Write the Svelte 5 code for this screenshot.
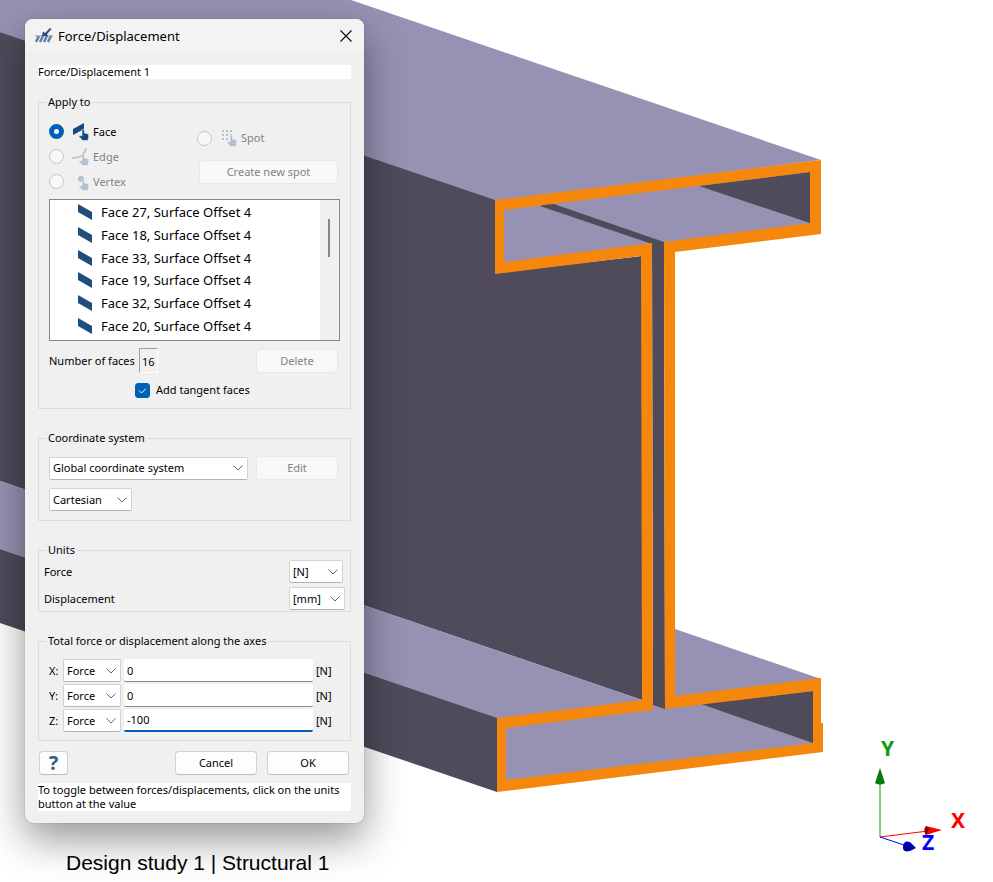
<script>
	const targets = [
		{ id: 'face', label: 'Face' },
		{ id: 'edge', label: 'Edge' },
		{ id: 'vertex', label: 'Vertex' }
	];
	const faces = [27, 18, 33, 19, 32, 20];

	let name = $state('Force/Displacement 1');
	let target = $state('face');
	let tangent = $state(true);
	let axes = $state([
		{ axis: 'X', value: '0' },
		{ axis: 'Y', value: '0' },
		{ axis: 'Z', value: '-100' }
	]);
</script>

{#snippet dropdown(label, options, size)}
	<span class="dropdown dropdown--{size}">
		<select aria-label={label}>
			{#each options as option}
				<option>{option}</option>
			{/each}
		</select>
		<svg class="dropdown__arrow" viewBox="0 0 10 6" aria-hidden="true">
			<path d="M0.5 0.5 L5 5 L9.5 0.5" />
		</svg>
	</span>
{/snippet}

{#snippet targetIcon(id)}
	<svg class="target-icon" viewBox="0 0 18 18" aria-hidden="true">
		{#if id === 'face'}
			<path d="M1 6 L12 0 V6 L1 12 Z" />
		{:else if id === 'edge'}
			<path class="target-icon__line" d="M0 10 C7 10 13 7 14 0" />
		{:else if id === 'vertex'}
			<circle cx="9" cy="6" r="3" />
		{:else}
			{#each [1, 5, 9] as y}
				{#each [2, 6, 10] as x}
					<rect {x} {y} width="2" height="2" />
				{/each}
			{/each}
		{/if}
		<path
			class="target-icon__hand"
			d="M10 7 C10 6 12.4 6 12.4 7 V10 L16.6 11 V15 L15.6 17.5 H10.6 L7 13.4 L8 12.2 L10 13 Z"
		/>
	</svg>
{/snippet}

<main class="viewport">
	<svg class="scene" viewBox="0 0 993 882" preserveAspectRatio="xMinYMin slice" aria-hidden="true">
		<path class="light" d="M0 0 H351 L821 160 L495 201 L0 32 Z" />
		<path class="dark" d="M0 32 L495 200 V273 L642 256 V700 L0 481 Z" />
		<path class="light" d="M0 481 L642 700 V702 L497 720 L0 549 Z" />
		<path class="dark" d="M0 549 L497 718 V792 L0 623 Z" />
		<path class="light" d="M675 629 L821 679 L675 698 Z" />
		<path class="light" d="M500 205 L815 166 V228 L500 267 Z" />
		<path class="light" d="M502 723 L818 685 V747 L502 786 Z" />
		<path class="dark" d="M699 186 L810 172 V223 Z" />
		<path class="dark" d="M701 704 L813 691 V743 Z" />
		<path class="dark" d="M540 206 L551 203 L664 242 L665 709 L653 705 L652 244 Z" />
		<path
			class="edge"
			d="M495 200 L821 160 V234 L675 252 L675 696 L821 678 V723 H823 V752 L497 792 V718
				L642 700 L641 256 L495 274 Z
				M504 210 V262 L652 243 L653 710 L506 728 V780 L813 743 V691 L665 709 L664 242
				L810 223 V172 Z"
		/>
	</svg>

	<section class="dialog" aria-labelledby="dialog-title">
		<header class="titlebar">
			<svg class="titlebar__icon" viewBox="0 0 18 16" aria-hidden="true">
				<path class="titlebar__hatch" d="M1 14 L4 8 M5 14 L8 8 M9 14 L12 8 M13 14 L16 8" />
				<path class="titlebar__base" d="M0 8 H18" />
				<path class="titlebar__force" d="M7 8 L8 3.5 L10 5 L15 0 L16.5 1 L12 6 L13 8 Z" />
			</svg>
			<h1 id="dialog-title">Force/Displacement</h1>
			<button class="close" aria-label="Close">
				<svg viewBox="0 0 12 12"><path d="M0.5 0.5 L11.5 11.5 M11.5 0.5 L0.5 11.5" /></svg>
			</button>
		</header>

		<div class="content">
			<input class="name" aria-label="Name" bind:value={name} />

			<fieldset class="apply">
				<legend>Apply to</legend>
				<div class="targets">
					<div class="targets__main">
						{#each targets as item}
							<label class="target" class:target--off={item.id !== 'face'}>
								<input
									type="radio"
									name="target"
									value={item.id}
									bind:group={target}
									disabled={item.id !== 'face'}
								/>
								{@render targetIcon(item.id)}
								{item.label}
							</label>
						{/each}
					</div>
					<div class="targets__spot">
						<label class="target target--off">
							<input type="radio" name="target" value="spot" bind:group={target} disabled />
							{@render targetIcon('spot')}
							Spot
						</label>
						<button class="button" disabled>Create new spot</button>
					</div>
				</div>

				<div class="list">
					<ul>
						{#each faces as face}
							<li>
								<svg viewBox="0 0 14 16" aria-hidden="true">
									<path d="M0 0 L14 8 V16 L0 8 Z" />
								</svg>
								Face {face}, Surface Offset 4
							</li>
						{/each}
					</ul>
					<div class="scrollbar"><span class="scrollbar__thumb"></span></div>
				</div>

				<div class="row">
					<span>Number of faces</span>
					<output class="count">16</output>
					<button class="button button--small row__end" disabled>Delete</button>
				</div>
				<label class="tangent">
					<input type="checkbox" bind:checked={tangent} />
					<svg class="tangent__tick" viewBox="0 0 15 15" aria-hidden="true">
						<path d="M4 7.5 L6.5 10 L11 5.5" />
					</svg>
					Add tangent faces
				</label>
			</fieldset>

			<fieldset class="system">
				<legend>Coordinate system</legend>
				<div class="row">
					{@render dropdown('Coordinate system', ['Global coordinate system'], 'wide')}
					<button class="button button--small row__end" disabled>Edit</button>
				</div>
				{@render dropdown('System type', ['Cartesian'], 'medium')}
			</fieldset>

			<fieldset class="units">
				<legend>Units</legend>
				<div class="unit">
					<span>Force</span>
					{@render dropdown('Force unit', ['[N]'], 'force')}
				</div>
				<div class="unit">
					<span>Displacement</span>
					{@render dropdown('Displacement unit', ['[mm]'], 'length')}
				</div>
			</fieldset>

			<fieldset class="axes">
				<legend>Total force or displacement along the axes</legend>
				{#each axes as row}
					<div class="axis">
						<label for="axis-{row.axis}">{row.axis}:</label>
						{@render dropdown(`${row.axis} type`, ['Force', 'Displacement'], 'axis')}
						<input
							id="axis-{row.axis}"
							class:active={row.axis === 'Z'}
							bind:value={row.value}
						/>
						<span>[N]</span>
					</div>
				{/each}
			</fieldset>

			<footer class="actions">
				<button class="button help" aria-label="Help">?</button>
				<button class="button button--small">Cancel</button>
				<button class="button button--small">OK</button>
			</footer>
			<p class="note">
				To toggle between forces/displacements, click on the units button at the value
			</p>
		</div>
	</section>

	<p class="caption">Design study 1 | Structural 1</p>

	<svg class="triad" viewBox="0 -10 110 130" role="img" aria-label="Axes">
		<path class="triad__y" d="M16 97 V40" />
		<path class="triad__y-head" d="M16 28 L21 43 Q16 46 11 43 Z" />
		<path class="triad__x" d="M16 97 L64 91" />
		<path class="triad__x-head" d="M78 90 L62 86 Q59 90 62 95 Z" />
		<path class="triad__x-cap" d="M62 86 Q59 90 62 95 L64 91 L66 89 Z" />
		<path class="triad__z" d="M16 97 L40 105" />
		<path class="triad__z-head" d="M52 108 L46 111 Q38 113 39 106 Q40 100 46 102 Z" />
		<text class="triad__label triad__label--y" x="17" y="16">Y</text>
		<text class="triad__label triad__label--x" x="87" y="88">X</text>
		<text class="triad__label triad__label--z" x="58" y="110">Z</text>
	</svg>
</main>

<style>
	:global(body) {
		background: #fff;
	}

	.viewport {
		position: relative;
		box-sizing: border-box;
		min-height: 100vh;
		padding: 19px 25px 0;
		overflow: hidden;
		font-family: 'Noto Sans', 'Open Sans', sans-serif;
		font-size: 11px;
		line-height: 14px;
		color: #000;
	}

	.scene {
		position: absolute;
		top: 0;
		left: 0;
		width: 100%;
		height: 100%;
	}

	.light {
		fill: #9792b3;
	}

	.dark {
		fill: #4f4b5b;
	}

	.edge {
		fill: #f5870c;
		fill-rule: evenodd;
	}

	.dialog {
		position: relative;
		box-sizing: border-box;
		width: 339px;
		background: #f0f0f0;
		border-radius: 8px;
		box-shadow: 0 0 1px rgba(0, 0, 0, 0.5), 0 16px 40px rgba(0, 0, 0, 0.42);
	}

	.titlebar {
		display: flex;
		align-items: center;
		gap: 5px;
		height: 33px;
		padding: 0 12px 0 10px;
		background: #f3f3f3;
		border-radius: 8px 8px 0 0;
	}

	.titlebar h1 {
		flex: 1;
		margin: 0;
		font-size: 13px;
		font-weight: 400;
	}

	.titlebar__icon {
		width: 18px;
		height: 16px;
		fill: none;
	}

	.titlebar__hatch {
		stroke: #5f7f9f;
		stroke-width: 2.5;
	}

	.titlebar__base {
		stroke: #7d97b0;
		stroke-width: 1;
	}

	.titlebar__force {
		fill: #1f4e7d;
	}

	.close {
		display: flex;
		padding: 0;
		background: none;
		border: 0;
	}

	.close svg {
		width: 12px;
		height: 12px;
		stroke: #111;
		stroke-width: 1.2;
	}

	.content {
		display: flex;
		flex-direction: column;
		padding: 13px 13px 12px;
	}

	input,
	select,
	button {
		box-sizing: border-box;
		margin: 0;
		font: inherit;
		color: inherit;
	}

	.name {
		width: 100%;
		height: 14px;
		margin-bottom: 16px;
		padding: 0;
		background: #fff;
		border: 0;
	}

	fieldset {
		min-width: 0;
		margin: 0 0 22px;
		padding: 0 10px;
		border: 1px solid #dcdcdc;
	}

	legend {
		height: 14px;
		margin-left: -3px;
		padding: 0 2px;
	}

	.button {
		height: 24px;
		padding: 0;
		background: #fdfdfd;
		border: 1px solid #d0d0d0;
		border-bottom-color: #bcbcbc;
		border-radius: 4px;
	}

	.button:disabled {
		color: #838383;
		background: #f8f8f8;
		border-color: #e8e8e8;
	}

	.button--small {
		width: 82px;
	}

	.row {
		display: flex;
		align-items: center;
	}

	.row__end {
		margin: 0 2px 0 auto;
	}

	.dropdown {
		display: grid;
		align-items: center;
	}

	.dropdown select,
	.dropdown__arrow {
		grid-area: 1 / 1;
	}

	.dropdown select {
		width: 100%;
		height: 23px;
		padding: 0 3px;
		background: #fff;
		border: 1px solid #d2d2d2;
		border-bottom-color: #b4b4b4;
		border-radius: 2px;
		appearance: none;
	}

	.dropdown__arrow {
		justify-self: end;
		width: 10px;
		height: 6px;
		margin-right: 5px;
		fill: none;
		stroke: #666;
		stroke-width: 1;
		pointer-events: none;
	}

	.dropdown--wide {
		width: 199px;
	}

	.dropdown--medium {
		width: 83px;
	}

	.dropdown--force {
		width: 54px;
	}

	.dropdown--length {
		width: 56px;
	}

	.dropdown--axis {
		width: 58px;
	}

	.apply {
		padding: 10px 10px 9px;
	}

	.targets {
		display: grid;
		grid-template-columns: 148px 1fr;
	}

	.targets__main {
		display: grid;
		grid-auto-rows: 25px;
	}

	.targets__spot {
		display: flex;
		flex-direction: column;
		gap: 10px;
		padding: 7px 2px 0 0;
	}

	.targets__spot .target {
		height: 24px;
	}

	.targets__spot .button {
		margin-left: 2px;
	}

	.target {
		display: flex;
		align-items: center;
	}

	.target--off {
		color: #838383;
	}

	.target input {
		width: 15px;
		height: 15px;
		background: #f8f8f8;
		border: 1px solid #c4c4c4;
		border-radius: 50%;
		appearance: none;
	}

	.target input:checked {
		background: #fff;
		border: 5px solid #005fb8;
	}

	.target-icon {
		width: 18px;
		height: 18px;
		margin: 0 3px 0 8px;
		fill: #174a7c;
	}

	.target-icon__line {
		fill: none;
		stroke: #174a7c;
		stroke-width: 1.5;
	}

	.target-icon__hand {
		stroke: #f0f0f0;
		stroke-width: 0.6;
	}

	.target--off .target-icon {
		opacity: 0.28;
	}

	.list {
		display: flex;
		box-sizing: border-box;
		height: 142px;
		margin: 5px 0 7px;
		background: #fff;
		border: 1px solid #828790;
	}

	.list ul {
		display: flex;
		flex: 1;
		flex-direction: column;
		margin: 0;
		padding: 1px 0 3px 28px;
		list-style: none;
		font-size: 13px;
	}

	.list li {
		display: flex;
		flex: 1;
		gap: 9px;
		align-items: center;
	}

	.list li svg {
		width: 14px;
		height: 16px;
		fill: #1f4e7d;
	}

	.scrollbar {
		width: 19px;
		background: #f0f0f0;
	}

	.scrollbar__thumb {
		display: block;
		width: 2px;
		height: 38px;
		margin: 19px 0 0 8px;
		background: #868686;
	}

	.count {
		box-sizing: border-box;
		width: 19px;
		height: 25px;
		margin-left: 4px;
		border: 1px solid #fff;
		border-top-color: #a0a0a0;
		border-left-color: #a0a0a0;
		line-height: 25px;
		text-align: center;
	}

	.tangent {
		display: grid;
		grid-template-columns: 15px auto;
		column-gap: 6px;
		align-items: center;
		justify-content: start;
		height: 18px;
		margin: 8px 0 0 86px;
	}

	.tangent input {
		grid-area: 1 / 1;
		width: 15px;
		height: 15px;
		background: #fff;
		border: 1px solid #888;
		border-radius: 3px;
		appearance: none;
	}

	.tangent input:checked {
		background: #005fb8;
		border-color: #005fb8;
	}

	.tangent__tick {
		grid-area: 1 / 1;
		width: 15px;
		height: 15px;
		fill: none;
		stroke: #fff;
		pointer-events: none;
	}

	.system {
		padding: 11px 10px 9px;
	}

	.system .row {
		margin-bottom: 8px;
	}

	.units {
		padding: 3px 5px 1px;
	}

	.units legend {
		margin-left: 2px;
	}

	.unit {
		display: grid;
		grid-template-columns: 1fr 56px;
		align-items: center;
	}

	.unit + .unit {
		margin-top: 4px;
	}

	.axes {
		display: grid;
		gap: 2px;
		margin-bottom: 10px;
		padding: 11px 10px 8px;
	}

	.axis {
		display: grid;
		grid-template-columns: 14px 58px 1fr 24px;
		align-items: center;
	}

	.axis input {
		height: 23px;
		margin: 0 3px;
		padding: 0 3px;
		background: #fff;
		border: 0;
		border-bottom: 1px solid #868686;
		border-radius: 2px;
		outline: none;
	}

	.axis input.active {
		border-bottom: 2px solid #005fb8;
	}

	.actions {
		display: flex;
		gap: 10px;
		padding: 0 2px 0 1px;
	}

	.help {
		width: 29px;
		margin-right: auto;
		color: #2f6088;
		font-size: 20px;
		font-weight: 700;
	}

	.note {
		margin: 8px 0 0;
		background: #fff;
	}

	.caption {
		position: relative;
		margin: 28px 0 0 41px;
		font-family: 'Liberation Sans', Arial, sans-serif;
		font-size: 21px;
		line-height: 24px;
	}

	.triad {
		position: absolute;
		right: 19px;
		bottom: 22px;
		width: 110px;
		height: 130px;
		fill: none;
	}

	.triad__label {
		font-family: 'Noto Sans', sans-serif;
		font-size: 21px;
		font-weight: 700;
	}

	.triad__y {
		stroke: #0a9a14;
	}

	.triad__y-head {
		fill: #087a10;
	}

	.triad__label--y {
		fill: #0a9a14;
	}

	.triad__x {
		stroke: #f00;
	}

	.triad__x-head,
	.triad__label--x {
		fill: #f00;
	}

	.triad__x-cap {
		fill: #8c0000;
	}

	.triad__z {
		stroke: #00f;
	}

	.triad__z-head {
		fill: #0000a8;
	}

	.triad__label--z {
		fill: #00f;
	}
</style>
